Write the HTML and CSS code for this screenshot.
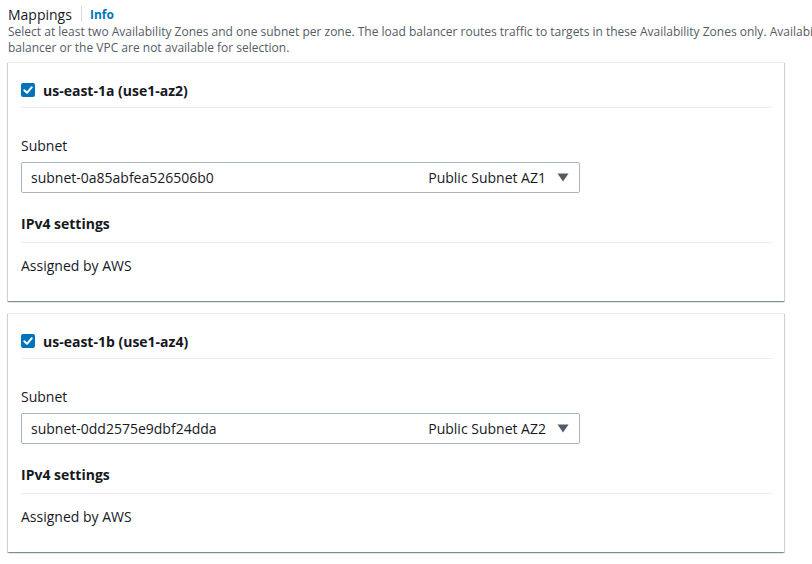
FILE: index.html
```html
<!DOCTYPE html>
<html>
<head>
<meta charset="utf-8">
<link rel="stylesheet" href="styles.css">
</head>
<body>
<div class="page">
  <div class="header">
    <span class="title">Mappings</span>
    <span class="sep"></span>
    <a class="info">Info</a>
  </div>
  <div class="desc">Select at least two Availability Zones and one subnet per zone. The load balancer routes traffic to targets in these Availability Zones only. Availability Zones that are not supported by the load<br>balancer or the VPC are not available for selection.</div>

  <div class="card">
    <div class="card-head">
      <span class="check"><svg width="14" height="14" viewBox="0 0 14 14"><rect width="14" height="14" rx="2" fill="#0073bb"/><path d="M3.3 7.2 L6 9.8 L10.8 4.2" fill="none" stroke="#fff" stroke-width="2" stroke-linecap="round" stroke-linejoin="round"/></svg></span>
      <span class="az">us-east-1a (use1-az2)</span>
    </div>
    <div class="field-label">Subnet</div>
    <div class="select">
      <span class="sel-val">subnet-0a85abfea526506b0</span>
      <span class="sel-tag">Public Subnet AZ1</span>
      <svg class="caret" width="12" height="9" viewBox="0 0 12 9"><path d="M0.5 0.5 H11.5 L6 8.5 Z" fill="#545b64"/></svg>
    </div>
    <div class="sub-head">IPv4 settings</div>
    <div class="assigned">Assigned by AWS</div>
  </div>

  <div class="card">
    <div class="card-head">
      <span class="check"><svg width="14" height="14" viewBox="0 0 14 14"><rect width="14" height="14" rx="2" fill="#0073bb"/><path d="M3.3 7.2 L6 9.8 L10.8 4.2" fill="none" stroke="#fff" stroke-width="2" stroke-linecap="round" stroke-linejoin="round"/></svg></span>
      <span class="az">us-east-1b (use1-az4)</span>
    </div>
    <div class="field-label">Subnet</div>
    <div class="select">
      <span class="sel-val">subnet-0dd2575e9dbf24dda</span>
      <span class="sel-tag">Public Subnet AZ2</span>
      <svg class="caret" width="12" height="9" viewBox="0 0 12 9"><path d="M0.5 0.5 H11.5 L6 8.5 Z" fill="#545b64"/></svg>
    </div>
    <div class="sub-head">IPv4 settings</div>
    <div class="assigned">Assigned by AWS</div>
  </div>
</div>
</body>
</html>
```

FILE: styles.css
```css
html, body {
  margin: 0;
  padding: 0;
  background: #ffffff;
  overflow: hidden;
}
body {
  font-family: "Open Sans", "Noto Sans", Arial, sans-serif;
  color: #16191f;
  font-size: 14px;
}
.page {
  padding: 4px 28px 0 8px;
  width: 776px;
}
.header {
  display: flex;
  align-items: center;
  height: 20px;
}
.title {
  font-size: 14px;
  color: #16191f;
}
.sep {
  width: 1px;
  height: 16px;
  background: #d5dbdb;
  margin: 0 8px 0 9px;
}
.info {
  font-size: 12px;
  font-weight: 700;
  color: #0073bb;
}
.desc {
  font-size: 12px;
  line-height: 16px;
  color: #545b64;
  white-space: nowrap;
  margin-bottom: 6px;
}
.card {
  border-top: 1px solid #eaeded;
  box-shadow: 0 1px 1px 0 rgba(0, 28, 36, 0.3), 1px 1px 1px 0 rgba(0, 28, 36, 0.15), -1px 1px 1px 0 rgba(0, 28, 36, 0.15);
  padding: 0 12px 24px 13px;
  margin-bottom: 12px;
  background: #fff;
}
.card-head {
  display: flex;
  align-items: center;
  height: 22px;
  padding: 16px 0 6px;
  border-bottom: 1px solid #eaeded;
  gap: 8px;
}
.check {
  display: flex;
  width: 14px;
  height: 14px;
}
.az {
  font-weight: 700;
  font-size: 14px;
}
.field-label {
  margin-top: 27px;
  line-height: 22px;
}
.select {
  margin-top: 5px;
  height: 29px;
  border: 1px solid #aab7b8;
  border-radius: 2px;
  display: flex;
  align-items: center;
  padding: 0 10px 0 9px;
  box-sizing: content-box;
  width: 538px;
}
.sel-val {
  flex: 1;
}
.sel-tag {
  margin-right: 11px;
}
.caret {
  display: block;
}
.sub-head {
  font-weight: 700;
  margin-top: 20px;
  line-height: 22px;
  padding-bottom: 7px;
  border-bottom: 1px solid #eaeded;
}
.assigned {
  margin-top: 12px;
  line-height: 22px;
  color: #16191f;
}
```
